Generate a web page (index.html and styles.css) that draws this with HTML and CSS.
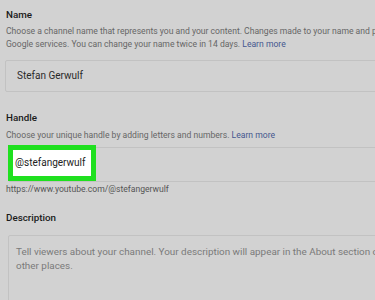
FILE: index.html
```html
<!DOCTYPE html>
<html lang="en">
<head>
    <meta charset="UTF-8">
    <meta name="viewport" content="width=device-width, initial-scale=1.0">
    <title>Channel details</title>
    <link rel="stylesheet" href="styles.css">
</head>
<body>
    <div class="page">
        <section class="field field-name">
            <h2 class="field-label">Name</h2>
            <p class="field-help">Choose a channel name that represents you and your content. Changes made to your name and picture are visible only on YouTube and not other<br>Google services. You can change your name twice in 14 days. <a href="#">Learn more</a></p>
            <div class="text-box name-box">Stefan Gerwulf</div>
        </section>

        <section class="field field-handle">
            <h2 class="field-label">Handle</h2>
            <p class="field-help">Choose your unique handle by adding letters and numbers. <a href="#">Learn more</a></p>
            <div class="text-box handle-box">
                <span class="handle-value">@stefangerwulf</span>
            </div>
            <p class="handle-url">https://www.youtube.com/@stefangerwulf</p>
        </section>

        <section class="field field-desc">
            <h2 class="field-label">Description</h2>
            <div class="text-box desc-box">Tell viewers about your channel. Your description will appear in the About section of your channel and search results, among<br>other places.</div>
        </section>
    </div>
</body>
</html>
```

FILE: styles.css
```css
html, body {
    margin: 0;
    padding: 0;
}
body {
    font-family: Roboto, "Liberation Sans", Arial, sans-serif;
    background-color: #d2d2d2;
    width: 375px;
    height: 300px;
    overflow: hidden;
}
.page {
    padding: 8px 0 0 6px;
    width: 620px;
}
.field-label {
    margin: 0;
    font-size: 9.8px;
    font-weight: 500;
    color: #1a1a1a;
    line-height: 14px;
}
.field-help {
    margin: 3px 0 0;
    font-size: 8.6px;
    line-height: 13px;
    color: #666;
    white-space: nowrap;
}
.field-help a {
    color: #45578f;
    text-decoration: none;
}
.text-box {
    border: 1px solid #c2c2c2;
    border-radius: 2px;
    font-size: 10px;
    color: #2a2a2a;
}
.name-box {
    margin: 9px 0 0 -1px;
    height: 30px;
    line-height: 30px;
    padding-left: 11px;
}
.field-handle {
    margin-top: 19px;
}
.field-handle .field-help {
    margin-top: 4px;
}
.handle-box {
    margin: 5px 0 0 2px;
    height: 33px;
    position: relative;
}
.handle-value {
    position: absolute;
    left: -1px;
    top: -3px;
    width: 76px;
    height: 26px;
    line-height: 26px;
    padding-left: 2px;
    background: #fff;
    border: 5px solid #1fe01f;
    color: #222;
}
.handle-url {
    margin: 1px 0 0;
    font-size: 8.6px;
    line-height: 12px;
    color: #555;
}
.field-desc {
    margin-top: 16px;
}
.desc-box {
    margin: 10px 0 0 2px;
    height: 80px;
    padding: 9px 10px 0 7px;
    font-size: 9.9px;
    color: #7a7a7a;
    line-height: 14px;
    white-space: nowrap;
}
```
